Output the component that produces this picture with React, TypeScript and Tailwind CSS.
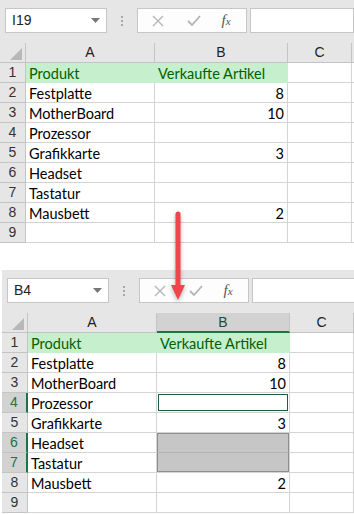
import React from "react";

const ROWS: [string, string][] = [
  ["Produkt", "Verkaufte Artikel"],
  ["Festplatte", "8"],
  ["MotherBoard", "10"],
  ["Prozessor", ""],
  ["Grafikkarte", "3"],
  ["Headset", ""],
  ["Tastatur", ""],
  ["Mausbett", "2"],
  ["", ""],
];

const cellFont = { fontFamily: "Lato, 'Liberation Sans', sans-serif" };
const uiFont = { fontFamily: "'Liberation Sans', Arial, sans-serif" };

function Toolbar({ name }: { name: string }) {
  return (
    <div className="h-[43px] flex items-start pt-[8px] pl-[5px]">
      <div
        className="w-[102px] h-[25px] bg-white border border-[#c6c6c6] flex items-center justify-between pl-[6px] pr-[6px] text-[14px] text-[#222]"
        style={uiFont}
      >
        <span>{name}</span>
        <svg width="9" height="5" viewBox="0 0 9 5">
          <polygon points="0,0 9,0 4.5,5" fill="#777" />
        </svg>
      </div>
      <div className="w-[30px] h-[25px] flex flex-col items-center justify-center gap-[2px]">
        <div className="w-[2px] h-[2px] bg-[#a8a8a8]" />
        <div className="w-[2px] h-[2px] bg-[#a8a8a8]" />
        <div className="w-[2px] h-[2px] bg-[#a8a8a8]" />
      </div>
      <div className="w-[110px] h-[25px] bg-[#fdfdfd] border border-[#c6c6c6] flex items-center">
        <div className="w-[40px] flex justify-center">
          <svg width="12" height="12" viewBox="0 0 12 12">
            <path d="M1 1 L11 11 M11 1 L1 11" stroke="#b4b4b4" strokeWidth="1.3" />
          </svg>
        </div>
        <div className="w-[32px] flex justify-center">
          <svg width="14" height="11" viewBox="0 0 14 11">
            <path d="M1 6 L5 10 L13 1" stroke="#b4b4b4" strokeWidth="1.8" fill="none" />
          </svg>
        </div>
        <div className="w-[32px] flex justify-center">
          <span
            className="italic text-[15px] text-[#555] leading-none"
            style={{ fontFamily: "'Liberation Serif', 'Times New Roman', serif" }}
          >
            f<span className="text-[11px]">x</span>
          </span>
        </div>
      </div>
      <div className="flex-1 ml-[3px] h-[25px] bg-white border border-[#c6c6c6]" />
    </div>
  );
}

function Sheet({ name, selected }: { name: string; selected: boolean }) {
  const rowSel = (r: number) => selected && (r === 4 || r === 6 || r === 7);
  return (
    <div className="h-[243px] bg-[#e6e6e6] overflow-hidden w-[354px]">
      <Toolbar name={name} />
      {/* column header */}
      <div className="flex h-[20px] text-[14px] text-[#222]" style={uiFont}>
        <div className="w-[26px] shrink-0 border-r border-b border-[#c4c4c4] bg-[#e6e6e6] relative">
          <svg className="absolute left-[10px] top-[5px]" width="12" height="12" viewBox="0 0 12 12">
            <polygon points="12,0 12,12 0,12" fill="#b8b8b8" />
          </svg>
        </div>
        <div className="w-[129px] shrink-0 border-r border-b border-[#c4c4c4] flex items-center justify-center">
          A
        </div>
        <div
          className={
            selected
              ? "w-[133px] shrink-0 border-r border-[#c4c4c4] border-b-2 border-b-[#217346] bg-[#d2d2d2] flex items-center justify-center text-[#1e4d33]"
              : "w-[133px] shrink-0 border-r border-b border-[#c4c4c4] flex items-center justify-center"
          }
        >
          B
        </div>
        <div className="w-[64px] shrink-0 border-r border-b border-[#c4c4c4] flex items-center justify-center">
          C
        </div>
        <div className="flex-1 border-b border-[#c4c4c4]" />
      </div>
      {ROWS.map(([a, b], i) => {
        const r = i + 1;
        const header = r === 1;
        const sel = rowSel(r);
        const isB4 = selected && r === 4;
        const isRange = selected && (r === 6 || r === 7);
        return (
          <div key={r} className="flex h-[20px] text-[14.5px] leading-[19px]" style={cellFont}>
            <div
              className={
                sel
                  ? "w-[26px] shrink-0 border-r-2 border-r-[#217346] border-b border-b-[#c4c4c4] bg-[#d2d2d2] flex items-center justify-center text-[14px] text-[#217346]"
                  : "w-[26px] shrink-0 border-r border-b border-[#c4c4c4] bg-[#e6e6e6] flex items-center justify-center text-[14px] text-[#333]"
              }
              style={uiFont}
            >
              {r}
            </div>
            <div
              className={
                header
                  ? "w-[129px] shrink-0 bg-[#c6efce] text-[#006100] border-b border-[#c6efce] pl-[3px] pt-[1px]"
                  : "w-[129px] shrink-0 bg-white text-black border-r border-b border-[#d4d4d4] pl-[3px] pt-[1px]"
              }
            >
              {a}
            </div>
            <div
              className={
                header
                  ? "w-[133px] shrink-0 bg-[#c6efce] text-[#006100] border-b border-[#c6efce] pl-[3px] pt-[1px] whitespace-nowrap"
                  : isRange
                  ? "w-[133px] shrink-0 bg-white border-r border-b border-[#d4d4d4] relative"
                  : "w-[133px] shrink-0 bg-white text-black border-r border-b border-[#d4d4d4] pr-[3px] pt-[1px] text-right relative"
              }
            >
              {header ? b : isRange ? null : b}
              {isB4 && <div className="absolute left-[1px] right-[1px] top-[1px] bottom-[1px] border border-[#1f5c3b]" />}
              {r === 6 && selected && (
                <div className="absolute left-[0px] right-[0px] top-[0px] bottom-[-1px] bg-[#c6c6c6] border-t border-l border-r border-[#8e8e8e] border-b border-b-[#b2b2b2]" />
              )}
              {r === 7 && selected && (
                <div className="absolute left-[0px] right-[0px] top-[0px] bottom-[0px] bg-[#c6c6c6] border-b border-l border-r border-[#8e8e8e]" />
              )}
            </div>
            <div className="w-[64px] shrink-0 bg-white border-r border-b border-[#d4d4d4]" />
            <div className="flex-1 bg-white border-b border-[#d4d4d4]" />
          </div>
        );
      })}
    </div>
  );
}

export default function App() {
  return (
    <div className="w-[354px] h-[514px] bg-white relative overflow-hidden">
      <Sheet name="I19" selected={false} />
      <div className="h-[27px]" />
      <div className="ml-[2px]">
        <Sheet name="B4" selected={true} />
      </div>
      <svg
        className="absolute left-[168px] top-[208px]"
        width="22"
        height="96"
        viewBox="0 0 22 96"
        style={{ filter: "drop-shadow(0px 2px 2px rgba(0,0,0,0.3))" }}
      >
        <line x1="10" y1="6" x2="10" y2="80" stroke="#f2444b" strokeWidth="5" strokeLinecap="round" />
        <polygon points="3,77 17,77 10,92" fill="#f2444b" />
      </svg>
    </div>
  );
}
